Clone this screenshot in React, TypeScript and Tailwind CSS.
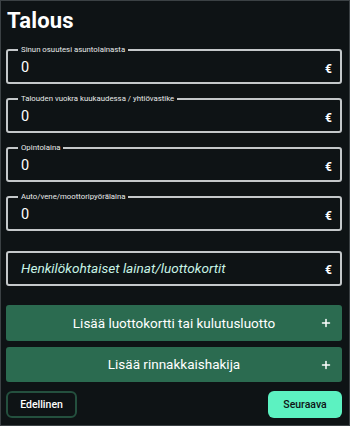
import { Plus } from 'lucide-react'

const fields = [
    'Sinun osuutesi asuntolainasta',
    'Talouden vuokra kuukaudessa / yhtiövastike',
    'Opintolaina',
    'Auto/vene/moottoripyörälaina',
]

function MoneyField({ label }: { label: string }) {
    return (
        <div className="relative border-2 border-[#c4c8ca] rounded-[3px] h-[35px] pl-[13px] pr-[8px] flex items-center justify-between">
            {/* label sits on the top border */}
            <span className="absolute -top-[6px] left-[10px] px-[3px] bg-[#0e1315] text-[7.8px] leading-[10px] text-[#e8eaea]">{label}</span>
            <span className="text-[14.5px] text-white pt-[3px]">0</span>
            <span className="text-[12px] font-bold text-white pt-[4px]">€</span>
        </div>
    )
}

export default function App() {
    return (
        <div className="w-[350px] h-[426px] bg-[#0e1315] border border-[#3b4144] pl-[5px] pr-[7px] font-['Roboto',sans-serif] text-white">
            <h1 className="text-[22px] font-bold leading-none pt-[9px] pl-[1px] tracking-[0.2px]">Talous</h1>

            <div className="flex flex-col gap-[14px] mt-[17px]">
                {fields.map(f => (
                    <MoneyField key={f} label={f} />
                ))}
            </div>

            <div className="mt-[20px] border-2 border-[#c4c8ca] rounded-[3px] h-[35px] pl-[13px] pr-[8px] flex items-center justify-between">
                <span className="text-[13.6px] italic text-[#c9f3e6]">Henkilökohtaiset lainat/luottokortit</span>
                <span className="text-[12px] font-bold text-white pt-[3px]">€</span>
            </div>

            <div className="flex flex-col gap-[6px] mt-[19px]">
                <button className="h-[36px] rounded-[3px] bg-[#2b6b50] flex items-center justify-between pl-[10px] pr-[10px]">
                    <span className="w-[12px]" />
                    <span className="text-[13.5px] text-white">Lisää luottokortti tai kulutusluotto</span>
                    <Plus className="w-[12px] h-[12px]" strokeWidth={3} />
                </button>
                <button className="h-[35px] rounded-[3px] bg-[#2b6b50] flex items-center justify-between pl-[10px] pr-[10px]">
                    <span className="w-[12px]" />
                    <span className="text-[13.5px] text-white">Lisää rinnakkaishakija</span>
                    <Plus className="w-[12px] h-[12px]" strokeWidth={3} />
                </button>
            </div>

            <div className="flex justify-between mt-[9px]">
                <button className="w-[71px] h-[27px] rounded-[6px] border-2 border-[#24503e] text-[10.5px] font-medium text-white">Edellinen</button>
                <button className="w-[74px] h-[27px] rounded-[6px] bg-[#5cf2c1] text-[10.5px] font-medium text-[#0e1315]">Seuraava</button>
            </div>
        </div>
    )
}
